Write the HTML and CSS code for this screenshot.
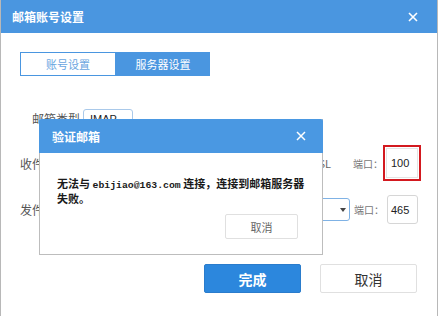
FILE: index.html
```html
<!DOCTYPE html>
<html lang="zh-CN">

<head>
    <meta charset="UTF-8">
    <title>邮箱账号设置</title>
    <link rel="stylesheet" href="styles.css">
</head>

<body>
    <div class="dialog">
        <div class="dlg_head">
            <span class="dlg_title">邮箱账号设置</span>
            <svg class="dlg_close" width="10" height="10" viewBox="0 0 10 10">
                <path d="M1 1L9 9M9 1L1 9" stroke="#fff" stroke-width="1.6" fill="none"/>
            </svg>
        </div>
        <div class="dlg_body">
            <div class="tabs">
                <span class="tab">账号设置</span>
                <span class="tab active">服务器设置</span>
            </div>
            <div class="form">
                <div class="row row1">
                    <span class="label">邮箱类型</span>
                    <span class="input type_input">IMAP</span>
                </div>
                <div class="row row2">
                    <span class="label">收件服务器</span>
                    <span class="input host_input">imap.163.com</span>
                    <span class="ssl">使用SSL</span>
                    <span class="port_label">端口：</span>
                    <span class="port_mark"><span class="input port_input">100</span></span>
                </div>
                <div class="row row3">
                    <span class="label">发件服务器</span>
                    <span class="input select">smtp.163.com<i class="arrow"></i></span>
                    <span class="port_label">端口：</span>
                    <span class="input port_input port2">465</span>
                </div>
            </div>
            <div class="actions">
                <button class="btn primary">完成</button>
                <button class="btn">取消</button>
            </div>
        </div>

        <!-- 弹出的验证提示 -->
        <div class="modal">
            <div class="modal_head">
                <span class="modal_title">验证邮箱</span>
                <svg class="modal_close" width="10" height="10" viewBox="0 0 10 10">
                    <path d="M1 1L9 9M9 1L1 9" stroke="#fff" stroke-width="1.5" fill="none"/>
                </svg>
            </div>
            <div class="modal_body">
                <p class="msg">无法与 <span class="mail">ebijiao@163.com</span> 连接，连接到邮箱服务器失败。</p>
                <div class="modal_btns">
                    <button class="btn small">取消</button>
                </div>
            </div>
        </div>
    </div>
</body>

</html>
```

FILE: styles.css
```css
* {
    margin: 0;
    padding: 0;
    box-sizing: border-box;
}

body {
    background: #fff;
    font-family: "Noto Sans CJK SC", "Liberation Sans", sans-serif;
    font-size: 12px;
    color: #333;
}

.dialog {
    position: relative;
    width: 438px;
    height: 316px;
    border-left: 1px solid #b8b8b8;
    border-right: 1px solid #b8b8b8;
    overflow: hidden;
}

.dlg_head {
    height: 33px;
    background: #4a96e0;
    display: flex;
    align-items: center;
    justify-content: space-between;
    padding: 0 19px 0 11px;
}

.dlg_title {
    color: #fff;
    font-size: 12px;
    font-weight: bold;
}

.dlg_body {
    padding: 19px 20px 0 19px;
}

.tabs {
    display: flex;
    height: 24px;
}

.tab {
    display: flex;
    align-items: center;
    justify-content: center;
    width: 96px;
    border: 1px solid #4a96e0;
    color: #6aa6df;
    font-size: 11px;
}

.tab.active {
    width: 94px;
    background: #4a96e0;
    color: #fff;
}

.form {
    margin-top: 33px;
}

.row {
    display: flex;
    align-items: center;
}

.row > * {
    flex-shrink: 0;
    white-space: nowrap;
}

.row1 {
    height: 19px;
}

.row2 {
    height: 36px;
    margin-top: 17px;
}

.row3 {
    height: 29px;
    margin-top: 14px;
}

.label {
    width: 60px;
    text-align: right;
    color: #555;
    font-size: 12px;
}

.input {
    display: flex;
    align-items: center;
    height: 100%;
    border: 1px solid #d6d6d6;
    border-radius: 3px;
    padding-left: 6px;
    font-family: "Liberation Sans", sans-serif;
    font-size: 11px;
    color: #222;
    background: #fff;
}

.type_input {
    margin-left: 3px;
    width: 50px;
    border-color: #a9c9ea;
}

.host_input {
    margin-left: 4px;
    width: 200px;
    height: 24px;
}

.ssl {
    margin-left: 6px;
    color: #666;
    font-size: 11px;
}

.port_label {
    width: 30px;
    color: #777;
    font-size: 10px;
}

.row2 .port_label {
    margin-left: 22px;
}

.port_mark {
    display: flex;
    height: 36px;
    width: 38px;
    border: 2px solid #d3191f;
    padding: 1px;
}

.port_mark .input {
    border-radius: 0;
    border-color: #e4e4e4;
    width: 100%;
    padding-left: 4px;
}

.select {
    position: relative;
    margin-left: 4px;
    width: 266px;
    height: 23px;
    border-color: #7fb2e5;
}

.arrow {
    position: absolute;
    right: 3px;
    top: 9px;
    border-left: 3px solid transparent;
    border-right: 3px solid transparent;
    border-top: 4px solid #444;
}

.row3 .port_label {
    margin-left: 4px;
}

.port2 {
    margin-left: 3px;
    width: 31px;
    padding-left: 3px;
}

.actions {
    display: flex;
    justify-content: flex-end;
    gap: 19px;
    margin-top: 40px;
}

.btn {
    width: 97px;
    height: 29px;
    border: 1px solid #e0e0e0;
    border-radius: 2px;
    background: #fff;
    font-family: "Noto Sans CJK SC", sans-serif;
    font-size: 14px;
    color: #333;
}

.btn.primary {
    background: #2c87dd;
    border-color: #2a7ccc;
    color: #fff;
    font-weight: bold;
}

.btn.small {
    width: 73px;
    height: 25px;
    font-size: 11px;
    color: #666;
}

.modal {
    position: absolute;
    left: 38px;
    top: 119px;
    width: 284px;
    height: 136px;
    border: 1px solid #bdbdbd;
    border-top: none;
    background: #fff;
}

.modal_head {
    height: 34px;
    margin: 0 -1px;
    background: #4a98e2;
    border-radius: 2px 2px 0 0;
    display: flex;
    align-items: center;
    justify-content: space-between;
    padding: 0 17px 0 13px;
}

.modal_title {
    color: #fff;
    font-size: 12px;
    font-weight: bold;
}

.modal_body {
    padding: 24px 24px 0 17px;
}

.msg {
    width: 256px;
    font-size: 11px;
    line-height: 13px;
    font-weight: bold;
    color: #1a1a1a;
}

.mail {
    font-family: "Liberation Mono", monospace;
    font-size: 9.8px;
}

.modal_btns {
    display: flex;
    justify-content: flex-end;
    margin-top: 9px;
}
```
